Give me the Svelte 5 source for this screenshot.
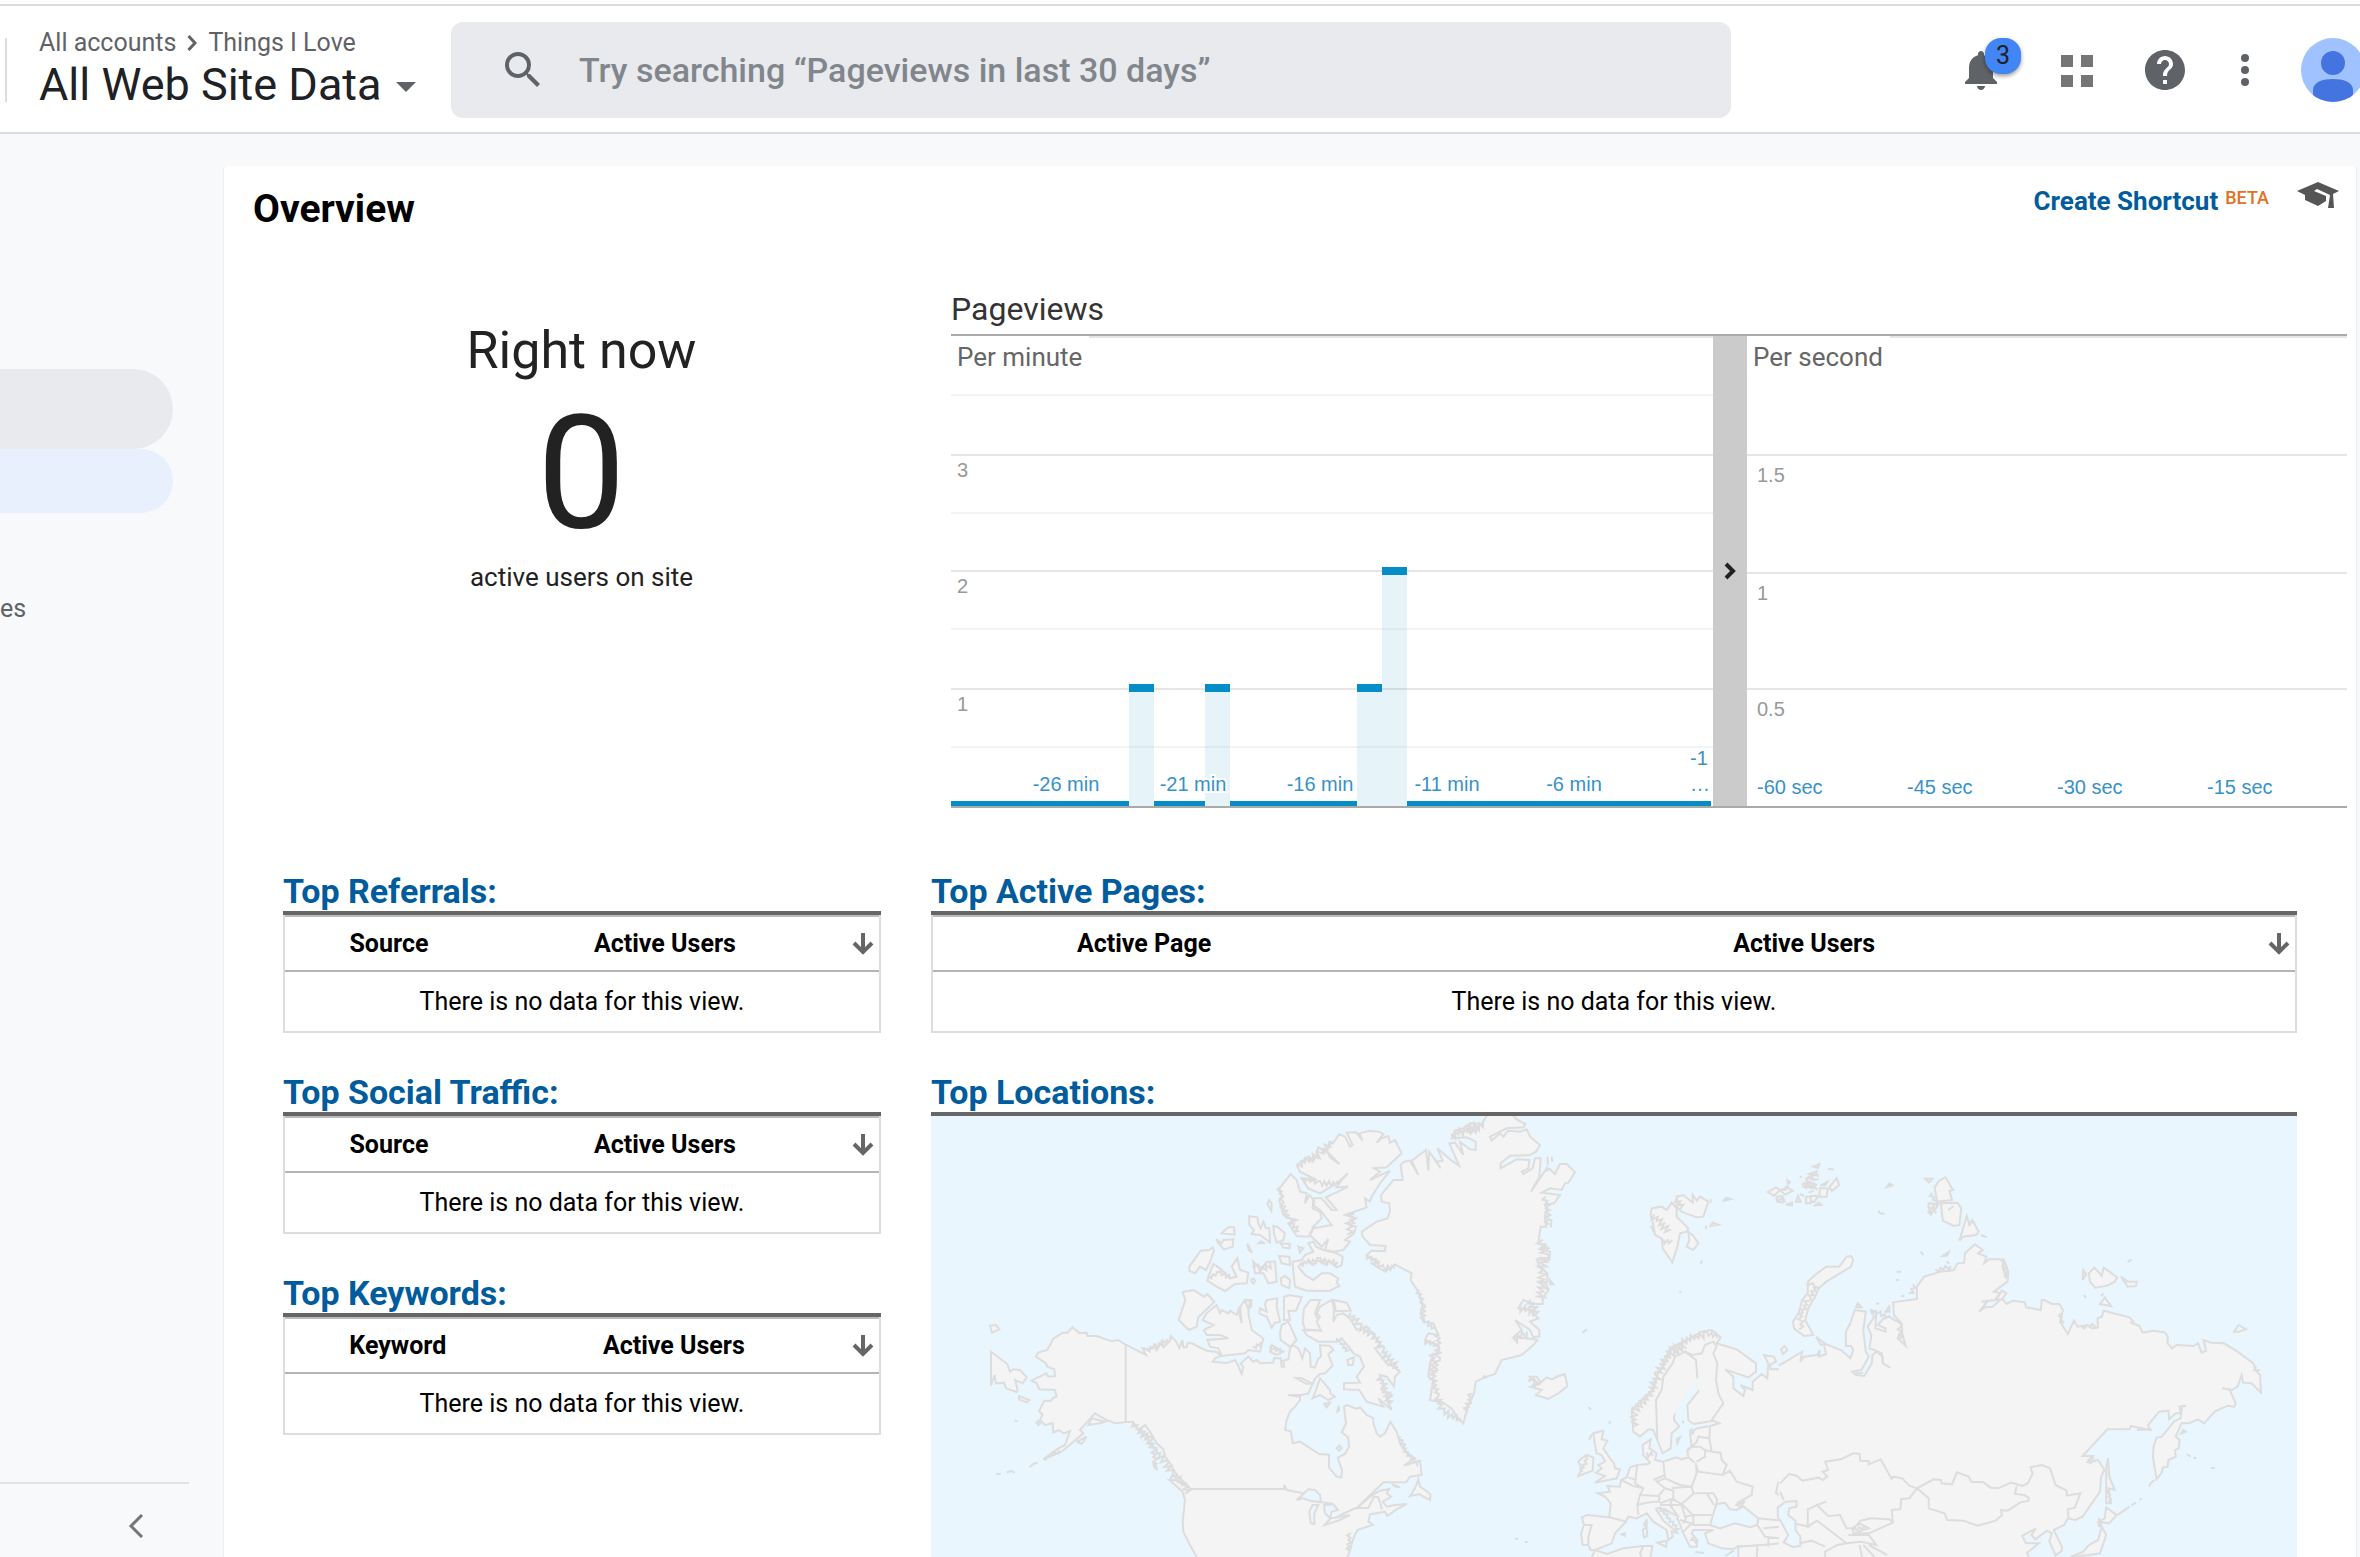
<script>
  const leftTables = [
    { title: 'Top Referrals:', first: 'Source', share: 35 },
    { title: 'Top Social Traffic:', first: 'Source', share: 35 },
    { title: 'Top Keywords:', first: 'Keyword', share: 38 }
  ];
  const activePages = { title: 'Top Active Pages:', first: 'Active Page', share: 31 };

  const slots = 30;
  const slotWidth = 760 / slots;
  const pageviews = [{ slot: 7, n: 1 }, { slot: 10, n: 1 }, { slot: 16, n: 1 }, { slot: 17, n: 2 }];
  const barX = (s) => Math.round(s * slotWidth + 0.3);
  const barTop = (n) => 465 - n * 117;
  const minorLines = [59, 177, 293, 411];
  const majorLines = [{ y: 119, n: 3 }, { y: 235, n: 2 }, { y: 353, n: 1 }];
  const secLines = [{ y: 119, n: '1.5' }, { y: 237, n: '1' }, { y: 353, n: '0.5' }];
  const minLabels = [-26, -21, -16, -11, -6].map((m, i) => ({ text: `${m} min`, x: 115 + i * 127 }));
  const secLabels = [-60, -45, -30, -15].map((s, i) => ({ text: `${s} sec`, x: 10 + i * 150 }));

  // Turns a coast line into the fine zigzag of a fjord coast.
  function fjords(points, amp) {
    let seed = 7;
    const rnd = () => (seed = (seed * 16807) % 2147483647) / 2147483647;
    let d = '';
    for (let i = 0; i < points.length - 1; i++) {
      const [x1, y1] = points[i];
      const [x2, y2] = points[i + 1];
      const len = Math.hypot(x2 - x1, y2 - y1);
      const steps = Math.max(1, Math.round(len / 7));
      for (let k = 0; k < steps; k++) {
        const t = k / steps;
        const off = (k % 2 ? 1 : -1) * amp * (0.3 + rnd());
        const x = x1 + (x2 - x1) * t - ((y2 - y1) / len) * off;
        const y = y1 + (y2 - y1) * t + ((x2 - x1) / len) * off;
        d += `${d ? 'L' : 'M'}${x.toFixed(0)} ${y.toFixed(0)}`;
      }
    }
    return d;
  }

  const america = [
    'M457 682L473 694 478 700 500 698 502 708 530 708 575 724 594 720 617 734 678 765 668 745 690 748 705 735 710 750 725 725 730 742 750 722 752 708 768 724 778 744 787 720 790 742 800 742 803 730 815 730 860 752 890 756 903 768 885 775 878 785 920 790 945 780 955 798 965 822 970 800 962 790 985 770 1000 785 1010 780 1020 790 1060 788 1062 775 1082 775 1085 800 1093 800 1090 782 1105 778 1110 745 1118 735 1135 745 1147 775 1155 745 1170 760 1172 800 1185 803 1195 775 1203 770 1200 735 1230 738 1240 750 1225 762 1238 797 1215 820 1200 822 1185 835 1165 880 1145 885 1105 885 1140 890 1140 900 1125 920 1110 935 1100 960 1095 990 1113 994 1118 1030 1140 1025 1197 1062 1227 1064 1227 1102 1250 1130 1264 1132 1266 1110 1253 1073 1275 1062 1287 1040 1284 1012 1265 997 1278 970 1272 920 1282 915 1310 927 1320 922 1340 945 1360 955 1360 970 1370 1000 1380 1010 1395 1000 1402 985 1411 965 1430 995 1440 1030 1455 1055 1485 1075 1452 1097 1500 1082 1505 1125 1470 1130 1458 1147 1390 1147 1310 1225 1350 1190 1380 1172 1408 1167 1400 1180 1413 1190 1388 1205 1400 1220 1425 1215 1460 1212 1430 1228 1402 1248 1395 1235 1350 1243 1345 1265 1358 1275 1312 1290 1300 1315 1290 1350 1280 1380 835 1380 810 1335 790 1295 788 1265 795 1200 788 1175 748 1140 765 1140 810 1165 795 1150 770 1125 750 1090 735 1070 730 1048 710 1030 690 995 675 975 655 990 638 965 617 966 587 970 560 960 525 940 480 990 490 1000 425 1055 370 1078 410 1048 435 1035 450 993 432 1000 415 990 400 998 398 970 375 975 360 960 368 945 357 933 373 902 392 903 400 893 410 890 405 870 358 868 350 850 335 842 378 820 385 830 405 828 403 808 382 800 378 790 348 770 355 757 382 750 400 716 428 698 442 698Z',
    'M1130 195L1165 170 1178 185 1185 172 1200 175 1190 155 1195 142 1225 160 1230 172 1258 192 1222 155 1228 125 1240 128 1258 103 1275 110 1290 140 1298 135 1280 98 1308 97 1328 122 1318 100 1350 92 1375 95 1390 102 1370 128 1385 115 1405 108 1410 128 1425 120 1445 160 1400 202 1362 205 1380 215 1350 240 1410 212 1380 250 1355 290 1350 305 1335 295 1340 322 1275 345 1308 355 1278 370 1308 380 1302 400 1275 420 1290 425 1270 450 1240 455 1215 450 1225 417 1205 440 1170 405 1180 385 1235 375 1200 330 1182 318 1182 295 1205 295 1235 330 1250 330 1218 292 1285 260 1250 262 1265 240 1284 220 1250 250 1200 280 1165 265 1145 235 1190 240 1160 225 1140 215Z',
    'M1112 223L1130 240 1140 275 1160 280 1155 310 1168 285 1180 300 1178 325 1200 335 1205 355 1175 385 1185 375 1165 410 1130 408 1105 370 1130 360 1100 352 1090 345 1078 300 1090 290 1075 270 1090 250Z',
    'M1048 300L1055 312 1054 332 1042 312Z M987 349L1012 352 1015 370 1022 385 1030 365 1038 385 1048 385 1050 427 1020 405 995 402 1002 390 988 375Z M1060 378L1072 380 1095 400 1090 420 1070 428 1062 400Z M905 400L925 382 942 382 944 404Z M888 418L905 430 910 420 940 418 938 440 912 448 900 435Z',
    'M808 500L842 452 868 450 878 442 882 452 868 490 858 510 840 500 825 520 808 512Z M865 530L880 492 900 505 915 520 930 535 950 530 935 500 952 475 960 510 985 518 980 550 945 552 915 573 890 560 862 542Z M1000 485L1015 500 1020 515 1040 485 1065 485 1070 545 1045 550 1030 520 1005 520Z M1077 468L1108 470 1110 495 1085 490Z M1082 430L1110 432 1108 445 1090 443Z M1135 440L1150 445 1140 458Z M982 430L996 458 986 450Z M1082 535L1095 528 1110 540 1108 565 1085 555Z M1015 430L1035 430 1022 424Z M993 540L1000 535 1006 543 1000 551Z',
    'M1118 485L1145 480 1155 465 1180 455 1165 430 1180 425 1188 440 1210 450 1250 460 1268 470 1265 495 1250 502 1225 482 1220 495 1190 480 1180 495 1165 485 1145 490 1135 500 1155 525 1180 540 1205 520 1230 520 1255 535 1250 548 1258 558 1230 572 1160 572 1125 560 1120 515Z',
    'M788 576L820 570 852 590 862 582 883 606 835 652 830 680 807 690 776 660 796 600Z',
    'M890 615L900 640 905 630 925 640 930 632 950 645 955 630 965 670 960 620 975 600 990 602 985 640 995 690 1030 715 1020 755 985 750 975 760 905 768 895 745 870 740 862 720 925 715 900 705 860 705 852 690 880 675 848 660 860 640Z M975 600L994 600 994 618 985 628Z',
    'M1040 600L1072 595 1070 620 1080 665 1065 668 1055 683 1040 650 1018 640 1020 625 1040 635 1035 612Z M1092 590L1110 585 1145 592 1128 632 1105 632 1110 660 1092 660Z M1085 675L1105 665 1130 720 1110 740 1082 720 1080 700Z M1055 735L1090 755 1070 765 1050 755Z',
    'M1172 600L1200 600 1185 640 1205 680 1203 692 1155 688 1148 665 1152 625Z',
    'M1200 620L1235 600 1242 625 1240 665 1250 645 1270 640 1290 655 1310 690 1340 680 1365 710 1385 740 1365 745 1380 765 1400 790 1420 800 1440 815 1425 830 1422 860 1400 830 1380 825 1390 850 1385 870 1415 885 1400 895 1415 930 1375 895 1390 920 1340 905 1318 870 1272 868 1272 850 1320 848 1310 830 1332 800 1320 770 1300 760 1290 745 1265 715 1250 725 1195 725 1160 705 1150 690 1203 692 1190 665 1200 650 1190 640Z',
    'M1240 600L1280 608 1292 632 1248 634Z M1200 835L1230 870 1230 880 1245 890 1225 900 1200 885 1178 895 1188 870Z M1212 912L1230 908 1220 922Z M1282 780L1302 772 1298 795 1285 795Z M1252 935L1256 917 1258 930Z M1250 1045L1258 1036 1265 1044 1258 1052Z',
    'M210 677L228 675 238 688 216 698Z M213 856L213 755 262 792 270 815 280 808 300 810 320 832 308 850 285 840 293 870 290 876 258 865 252 848 228 850 224 825Z M297 888L328 900 320 907 297 898Z M284 961L293 964 M349 968L354 963 361 970 355 975Z M472 1025L500 1010 485 1032Z M505 975L515 955 555 965 540 970Z M228 1122L242 1123 M260 1117L275 1113 285 1118 M328 1102L340 1092 353 1088',
    'M1495 1138L1485 1165 1470 1188 1500 1182 1510 1190 1530 1200 1531 1183 1515 1170 1500 1160Z',
    'M617 734V966 M810 1167H1093L1092 1155 1100 1170 1150 1180 M1205 1207L1240 1212 M1215 1275L1262 1245 1305 1225 1345 1223 1362 1190 1375 1192 1386 1228 M700 1085L712 1110 702 1100Z'
  ];
  const lakes = 'M1130 1200L1150 1182 1165 1168 1185 1170 1200 1185 1203 1207 1170 1202 1150 1195Z M1172 1270L1168 1235 1178 1215 1195 1215 1183 1240 1183 1272Z M1212 1215L1240 1213 1254 1230 1235 1235 1230 1255 1215 1240Z M1214 1275L1232 1255 1290 1245 1255 1262Z M1128 834L1145 834 1175 850 1160 852Z M1415 1152L1440 1162 1425 1160Z';
  const roughAmerica = [
    [[[640, 968], [665, 1000], [690, 1020], [705, 1055], [740, 1090], [755, 1120], [800, 1160], [805, 1185]], 9],
    [[[665, 985], [700, 1050], [710, 1105]], 6],
    [[[1290, 640], [1320, 680], [1360, 705], [1385, 750], [1435, 810]], 9],
    [[[1380, 830], [1400, 880], [1410, 920]], 9],
    [[[1135, 195], [1200, 160], [1240, 120]], 8],
    [[[1150, 235], [1200, 250], [1260, 250]], 7],
    [[[1080, 260], [1085, 310], [1110, 365], [1140, 400]], 6],
    [[[1300, 340], [1290, 380], [1290, 410]], 9],
    [[[1140, 490], [1200, 480], [1260, 490]], 7],
    [[[1000, 490], [1030, 510], [1060, 490]], 8],
    [[[865, 530], [900, 520], [940, 535]], 6],
    [[[680, 750], [750, 720]], 6],
    [[[370, 1078], [425, 1050]], 4],
    [[[1250, 715], [1290, 760]], 5],
    [[[1050, 740], [1090, 760]], 7],
    [[[1290, 1300], [1285, 1360]], 6],
    [[[1440, 1010], [1460, 1060], [1500, 1100]], 5],
    [[[1000, 740], [1030, 730]], 6]
  ].map(([p, a]) => fjords(p, a));

  const europe = [
    'M302 195L312 185 330 182 355 225 335 182 378 150 385 212 388 155 422 205 400 172 410 185 428 182 412 145 450 178 478 198 448 130 465 128 490 165 480 125 510 148 527 150 527 125 500 112 455 115 465 92 490 85 510 70 545 72 560 48 562 36 630 36 650 58 676 72 670 82 620 85 570 110 575 122 600 100 610 110 625 92 660 95 680 88 690 110 720 135 708 155 690 165 630 167 602 190 602 205 650 178 688 180 685 205 665 215 670 222 698 205 705 175 722 175 718 230 693 275 740 205 752 210 765 222 780 192 800 192 825 217 805 248 795 250 785 270 750 265 725 278 780 285 762 310 735 315 740 325 735 350 738 380 722 380 715 430 740 440 720 448 750 455 748 480 710 478 718 500 742 520 742 545 715 545 745 570 728 595 728 612 705 612 670 600 655 625 690 630 715 655 690 665 718 690 718 709 700 712 690 690 645 660 665 690 640 712 680 715 712 720 700 735 665 765 605 780 585 822 560 830 527 845 522 880 500 930 490 970 470 950 455 925 430 908 390 900 400 840 385 830 390 790 400 765 418 755 415 735 375 720 385 700 415 705 400 670 370 665 362 640 368 615 355 575 332 540 335 520 285 493 255 515 215 490 235 485 200 465 215 452 255 453 257 438 210 435 188 410 185 395 230 365 262 355 270 335 268 310 245 305 243 285 280 240 308 240Z',
    'M1055 325L1085 320 1100 330 1115 308 1130 325 1130 350 1165 385 1160 395 1140 400 1132 440 1117 487 1088 445 1085 415 1065 405 1060 375 1052 345Z M1130 290L1150 285 1178 308 1178 285 1190 302 1200 290 1225 305 1210 350 1190 352 1145 335 1130 320Z M1165 395L1180 408 1195 430 1180 450 1160 440 1168 420Z M1052 377L1068 408 M1268 303L1280 293 1292 297Z M1232 378L1238 368 1255 374Z M1218 377V387 M1202 491L1206 481 M1141 572V578 M1232 298V308',
    'M847 698L861 688 M866 921L873 930 M929 962V973 M1148 962L1151 970 M1132 1030L1140 1012 1130 1018Z M645 1316H655 M675 1326H683 M965 1303L975 1300 974 1308Z M1186 1356L1212 1359 M1275 1368L1302 1352 M755 358L752 382 M742 170L744 195 M755 170L757 185 M750 540L760 553 750 552Z',
    'M690 830L710 830 722 848 740 832 755 838 775 828 795 823 802 858 775 880 745 897 708 885 725 870 692 860 718 852Z',
    'M880 1000L910 992 905 1018 922 1022 910 1045 930 1075 942 1090 945 1105 960 1108 950 1135 885 1148 915 1128 888 1118 905 1105 895 1095 915 1085 905 1065 890 1060 885 1035Z M845 1075L860 1065 880 1072 878 1112 835 1128 845 1105 835 1085Z M868 1020L875 1003',
    'M872 1350L865 1335 848 1335 843 1300 852 1275 845 1252 862 1245 928 1252 932 1210 915 1190 893 1180 930 1175 922 1158 960 1160 963 1140 980 1132 990 1102 1012 1095 1045 1092 1050 1088 1030 1065 1028 1035 1052 1018 1048 1045 1070 1060 1065 1080 1090 1085 1130 1072 1145 1078 1165 1072 1162 1050 1175 1040 1170 1000 1190 985 1230 978 1258 970 1240 962 1180 972 1165 960 1162 915 1205 862 1205 850 1195 838 1168 842 1165 870 1125 905 1122 960 1138 980 1115 1000 1112 1045 1088 1060 1072 1020 1060 990 1045 988 1020 1010 1000 995 995 930 1040 885 1060 870 1075 815 1090 800 1110 745 1160 720 1205 695 1235 690 1262 712 1250 730 1310 748 1368 790 1368 815 1345 832 1275 808 1300 830 1300 865 1330 888 1335 870 1322 855 1358 870 1358 845 1385 822 1402 835 1405 790 1392 765 1422 770 1428 785 1410 795 1412 808 1442 808V1345L1405 1340 1372 1340 1315 1338 1300 1348 1265 1345 1225 1330 1215 1300 1240 1290 1180 1290 1175 1300 1192 1320 1190 1340 1170 1340 1150 1300 1135 1260 1110 1240 1078 1222 1068 1228 1090 1262 1135 1300 1115 1295 1118 1310 1105 1320 1100 1290 1060 1265 1040 1240 1010 1255 985 1250 975 1268 945 1300 935 1330 885 1350Z',
    'M872 1380L885 1350 922 1362 970 1345 1030 1338 1057 1338 1050 1380Z M1030 1338L1020 1360 1028 1380 M1315 1380V1340L1445 1330V1380Z M1372 1340L1370 1380 M1072 1328L1100 1322 1098 1340Z M1028 1290L1040 1280 1042 1308 1032 1312Z M1032 1275L1040 1258 1040 1280Z',
    'M1072 1020L1068 900 1085 870 1090 830 1118 790 1125 770 1155 755 1188 780 1192 835 M1155 755L1178 765 1205 760 1215 735 1240 725 1250 740 1240 760 1252 790 1248 840 1255 880 1270 910 1232 965 M1230 978L1228 1015 1195 1010 1190 1025 1165 1050 M1228 1015L1235 1055 1215 1050 1200 1040 1175 1040 M1235 1055L1262 1058 1265 1080 1280 1095 1268 1125 1195 1115 1185 1090 1165 1072 M1215 1050V1070L1190 1085',
    'M1090 1085L1095 1135 1140 1155 1175 1160 1190 1120 1188 1090 M1268 1125L1290 1112 1310 1145 1358 1160 1355 1185 1310 1210 M1175 1160L1180 1180 1240 1180 1252 1200 1245 1225 M1220 1180L1242 1215 M1012 1095L1005 1150 1030 1165 1020 1185 1075 1188 1095 1165 1070 1145 1095 1135 M963 1140L1000 1158 1030 1165 M985 1132L1010 1140 M1020 1185L1012 1215 1015 1245 M1012 1215L1040 1208 1060 1205 1078 1205V1190',
    'M1095 1165L1120 1172V1195L1080 1210 M1115 1195L1145 1212 1180 1182 M1115 1165L1145 1162 1175 1160 M1080 1215H1145L1155 1250 1180 1245V1275H1230 M1118 1195L1110 1215 1135 1250 M1145 1212L1178 1245 1235 1245 M1090 1225L1135 1250 1130 1260 M1140 1260L1175 1270 1150 1295 M1160 1250L1150 1270 M928 1252L980 1265 M852 1275H875L865 1310V1335 M1375 1255L1445 1262 M1372 1275L1395 1310 1445 1315 M1390 1285L1440 1280 M1405 1310V1340 M1435 1145L1428 1180 1445 1190 M1095 1125L1060 1140'
  ];
  const blackSea = 'M1230 1275L1245 1225 1252 1212 1275 1208 1290 1228 1310 1230 1325 1222 1310 1215 1335 1203 1325 1215 1375 1255 1372 1275 1350 1282 1305 1270 1260 1285Z';
  const roughEurope = [
    [[[455, 105], [500, 90], [560, 70]], 11],
    [[[480, 95], [540, 85]], 9],
    [[[735, 290], [745, 330], [740, 380]], 7],
    [[[725, 420], [735, 470], [725, 510], [730, 560], [715, 600]], 12],
    [[[660, 620], [710, 640]], 12],
    [[[690, 600], [715, 650]], 9],
    [[[640, 715], [690, 700]], 12],
    [[[355, 570], [370, 620], [370, 660], [410, 690]], 6],
    [[[375, 720], [410, 740]], 8],
    [[[400, 760], [398, 830], [410, 890], [430, 935], [490, 965]], 8],
    [[[415, 700], [413, 780], [400, 830]], 7],
    [[[515, 880], [495, 940]], 7],
    [[[560, 832], [545, 838]], 7],
    [[[200, 465], [250, 505], [290, 500]], 7],
    [[[1060, 345], [1110, 400]], 10],
    [[[1090, 420], [1120, 430]], 8],
    [[[1130, 295], [1150, 330]], 8],
    [[[690, 830], [710, 850], [700, 870]], 8],
    [[[1000, 980], [1005, 930], [1045, 890], [1075, 820], [1105, 760], [1150, 725], [1220, 700], [1260, 710]], 9],
    [[[1090, 780], [1160, 735]], 9],
    [[[1040, 1060], [1065, 1065]], 9],
    [[[865, 1065], [840, 1120]], 5],
    [[[1180, 1310], [1190, 1335]], 8],
    [[[740, 200], [755, 215]], 9],
    [[[1080, 1225], [1140, 1295]], 4],
    [[[1175, 985], [1180, 1010]], 5]
  ].map(([p, a]) => fjords(p, a));

  const asia = [
    'M-3 797L30 775 60 755 55 785 65 770 100 765 108 750 105 770 125 762 118 730 165 750 190 775 198 750 192 738 178 738 178 695 190 670 202 630 232 635 225 690 232 755 240 770 220 810 195 815 205 825 228 828 248 790 250 765 262 755 278 770 278 790 298 803 278 790 275 760 255 750 242 745 247 705 237 680 255 650 245 628 260 640 258 685 285 695 285 685 265 675 280 655 295 650 325 670 330 690 318 715 340 738 330 700 330 672 308 645 306 607 370 597 370 560 390 530 435 515 470 510 480 490 498 488 500 460 527 433 548 450 535 460 558 470 552 490 565 478 595 478 610 490 617 520 615 545 578 575 598 580 580 600 545 605 560 605 538 635 555 622 575 620 600 595 612 612 630 602 662 607 665 622 705 630 708 600 715 600 735 612 755 612 765 630 757 665 778 702 795 662 805 680 830 675 845 685 860 682 858 655 870 650 875 632 945 652 955 665 950 668 972 678 980 698 1010 692 1040 697 1048 710 1048 730 1060 745 1072 735 1118 738 1130 730 1140 758 1152 752 1145 720 1165 728 1200 730 1237 755 1280 790 1285 810 1298 825 1300 878 1275 850 1252 848 1248 825 1237 860 1222 870 1195 865 1215 868 1232 910 1228 920 1210 917 1175 935 1147 970 1130 958 1105 970 1085 970 1070 1010 1080 1020 1078 1045 1068 1050 1070 1070 1050 1080 1048 1100 1035 1103 1032 1118 1018 1138 1008 1070 1010 1040 1018 1013 1032 1010 1065 965 1083 955 1087 918 1098 918 1080 920 1083 940 1070 940 1052 958 1050 932 1025 935 995 975 1000 990 948 978 945 987 885 988 818 1068 845 1068 832 1085 860 1080 877 1110 868 1130 865 1175 818 1250 798 1260 778 1255 768 1275 740 1290 762 1340 762 1352 745 1366 737 1345 728 1325 735 1300 722 1292 690 1318 680 1305 692 1285 655 1308 665 1330 700 1330 668 1358 675 1380H-3',
    'M198 480L192 500 125 545 105 565 95 590 78 620 68 660 90 705 65 708 38 685 35 665 50 640 60 600 75 580 75 545 95 525 125 500 160 500 180 470 192 468Z M98 710L120 730 110 735Z M205 622L210 610 220 622Z M3 748L12 738 20 750 8 762Z',
    'M447 232L468 270 458 272 465 300 425 305 418 262 430 242Z M435 310L480 308 490 325 485 375 470 378 440 362Z M455 330L470 318 M485 422L505 348 512 375 520 360 537 395 530 405 495 410Z M402 310L428 312 420 328 402 322Z M392 236L412 236 403 247Z M543 405L560 412 M288 262L296 250 304 256Z M266 332L270 340 283 341 M380 455L388 465 M440 468L456 456 452 467Z M603 475L617 515 610 530 603 505Z M583 600L600 572 612 580 600 598Z',
    'M835 520L850 503 870 528 875 503 912 532 905 545 885 557 852 563 838 545Z M922 530L940 545 965 545 962 558 940 560Z M820 510L828 523 818 540Z M865 612L878 592 895 618Z M868 588L875 580 M822 585L827 594 M940 487L950 478 M1228 695L1240 675 1260 688 1240 695Z',
    'M887 1075L890 1130 905 1170 888 1165 895 1210 882 1210 882 1100Z M882 1222L910 1245 890 1270 862 1265 878 1255Z M870 1280L882 1305 865 1360 835 1365 785 1371 820 1355 835 1335 860 1320Z M862 1255L870 1280 862 1278Z M912 1245L945 1220 M950 1216L962 1208 M972 1200L978 1195 M998 1160L1002 1150 1012 1140 M1100 1062L1110 1070 M1118 1072L1125 1076 M1165 1104H1175 M1085 1000L1090 990 1097 995Z M965 990L1005 988 M832 1080L850 1072 M205 820H225 M315 515H328 M314 540H322 M328 588H336 M285 635L295 620 296 635Z M260 612L268 610',
    'M0 1150L25 1122 45 1127 60 1142 105 1133 115 1140 128 1130 115 1115 130 1110 122 1085 165 1078 198 1060 215 1062 217 1082 240 1083V1093L272 1078 302 1137 307 1130 330 1135 350 1157 370 1165 415 1138 435 1140 437 1150 465 1153 478 1117 510 1130 517 1145 550 1147 570 1163 590 1165 625 1148 655 1158 670 1150 683 1120 677 1102 708 1095 730 1105 745 1155 775 1172 775 1187 812 1180 797 1223 778 1228 780 1255 M370 1165L402 1195V1225L445 1240 452 1260 495 1262 535 1277 583 1262 600 1245 598 1230 615 1232 650 1207 672 1203V1193L660 1185 635 1182 640 1158',
    'M370 1165L350 1195 328 1197 325 1228 302 1230 305 1265 295 1258 245 1255 218 1262 200 1285 180 1285 162 1245 130 1248 100 1215 75 1228V1280L100 1262 180 1330 M100 1215L125 1205 M305 1268L240 1300 200 1300 195 1285 215 1270 240 1285 210 1295 M185 1305H240L260 1335 220 1325 180 1330 155 1335 122 1355V1371 M45 1272L80 1280 M55 1330L85 1322 122 1340 M215 1335L222 1371 M225 1335L255 1370 M240 1335L290 1365 M0 1175L10 1200'
  ];
  const caspian = 'M-6 1222L15 1205 45 1203V1220L25 1225 22 1245 42 1262V1290L55 1310V1338L35 1341 10 1328 22 1305 5 1270 -6 1250Z';
  const roughAsia = [
    [[[75, 545], [100, 560], [75, 600], [55, 650], [60, 695]], 6],
    [[[350, 580], [370, 550]], 7],
    [[[420, 510], [470, 500]], 6],
    [[[410, 280], [420, 310], [400, 340], [430, 335]], 6],
    [[[450, 485], [465, 485]], 4],
    [[[325, 680], [325, 725]], 6],
    [[[245, 630], [300, 655]], 6],
    [[[757, 640], [765, 680]], 4],
    [[[815, 680], [860, 675]], 5],
    [[[1285, 800], [1297, 820]], 7],
    [[[832, 1085], [860, 1082]], 5],
    [[[200, 1285], [235, 1285]], 6],
    [[[605, 490], [612, 540]], 4],
    [[[888, 1170], [892, 1212]], 4]
  ].map(([p, a]) => fjords(p, a));

  const franzJosef = [
    'M84 126L108 112 120 120 102 137Z M122 122L140 112 158 122 136 134Z M110 140L128 138 128 158 112 155Z M168 155L174 138 182 155Z M198 140H212V160H198Z M212 138L234 138 222 157 212 152Z M240 114L263 116 260 140 238 140Z M268 112L290 84 297 105 276 123Z',
    'M264 56L281 59 M220 50L238 42 234 54Z M208 72L230 64 226 76Z M196 88L214 76 220 90 236 88 M184 104L210 96 232 120 M190 98L214 116 M200 92L228 104 222 112 200 110Z M242 106L262 96 256 106Z M226 166L236 158 244 165Z M138 164L156 158 156 166Z M142 90L150 96 144 102Z M182 78V84 M228 70L236 80 M180 132L192 138 M206 128L222 122'
  ];
  const roughFranzJosef = [
    [[[188, 110], [205, 100], [228, 118]], 7],
    [[[108, 145], [130, 150], [142, 152]], 6],
    [[[128, 118], [150, 105]], 5],
    [[[205, 84], [226, 76]], 5]
  ].map(([p, a]) => fjords(p, a));
</script>

{#snippet report(t)}
  <section class="report">
    <h2><a href="#report">{t.title}</a></h2>
    <table>
      <colgroup>
        <col style="width: {t.share}%" />
        <col />
        <col class="sort-col" />
      </colgroup>
      <thead>
        <tr>
          <th>{t.first}</th>
          <th>Active Users</th>
          <th class="sort">
            <button aria-label="Sort {t.title}">
              <svg width="22" height="24" viewBox="0 0 22 24"><path d="M11 1V20M2 11l9 9 9-9" fill="none" stroke="#666" stroke-width="4" /></svg>
            </button>
          </th>
        </tr>
      </thead>
      <tbody>
        <tr><td colspan="3">There is no data for this view.</td></tr>
      </tbody>
    </table>
  </section>
{/snippet}

<div class="app">
  <header>
    <div class="account">
      <nav>
        <a href="#accounts">All accounts</a>
        <svg width="10" height="16" viewBox="0 0 10 16"><path d="M1.500 1l6.500 7-6.500 7" fill="none" stroke="#5f6368" stroke-width="3" /></svg>
        <a href="#property">Things I Love</a>
      </nav>
      <button class="view">
        All Web Site Data
        <svg width="20" height="10" viewBox="0 0 20 10"><path d="M0 0h20L10 10z" fill="#5f6368" /></svg>
      </button>
    </div>
    <label class="search">
      <svg width="48" height="48" viewBox="0 0 24 24" fill="#5f6368"><path d="M15.500 14h-.79l-.28-.27A6.471 6.471 0 0 0 16 9.500 6.500 6.500 0 1 0 9.500 16c1.610 0 3.090-.59 4.230-1.570l.27.28v.79l5 4.990L20.490 19l-4.990-5zm-6 0C7.010 14 5 11.990 5 9.500S7.010 5 9.500 5 14 7.010 14 9.500 11.990 14 9.500 14z" /></svg>
      <input type="text" aria-label="Search" placeholder="Try searching “Pageviews in last 30 days”" />
    </label>
    <div class="tools">
      <button class="bell" aria-label="Notifications">
        <svg width="48" height="48" viewBox="0 0 24 24" fill="#5f6368"><path d="M12 22c1.100 0 2-.9 2-2h-4c0 1.100.89 2 2 2zm6-6v-5c0-3.070-1.640-5.640-4.500-6.320V4c0-.83-.67-1.500-1.500-1.500s-1.500.67-1.500 1.500v.68C7.630 5.360 6 7.920 6 11v5l-2 2v1h16v-1l-2-2z" /></svg>
        <span class="badge">3</span>
      </button>
      <button class="grid" aria-label="Apps">
        <svg width="48" height="48" viewBox="0 0 24 24" fill="#757575"><path d="M4 4.500h6v6H4zM14 4.500h6v6h-6zM4 14.500h6v6H4zM14 14.500h6v6h-6z" /></svg>
      </button>
      <button class="help" aria-label="Help">
        <svg width="48" height="48" viewBox="0 0 24 24" fill="#5f6368"><path d="M12 2C6.480 2 2 6.480 2 12s4.480 10 10 10 10-4.480 10-10S17.520 2 12 2zm1 17h-2v-2h2v2zm2.070-7.750l-.9.920C13.450 12.900 13 13.500 13 15h-2v-.5c0-1.100.45-2.100 1.170-2.830l1.240-1.260c.37-.36.59-.86.59-1.410 0-1.100-.9-2-2-2s-2 .9-2 2H8c0-2.210 1.790-4 4-4s4 1.790 4 4c0 .88-.36 1.680-.93 2.250z" /></svg>
      </button>
      <button class="more" aria-label="More">
        <svg width="48" height="48" viewBox="0 0 24 24" fill="#5f6368"><circle cx="12" cy="6" r="2" /><circle cx="12" cy="12" r="2" /><circle cx="12" cy="18" r="2" /></svg>
      </button>
      <button class="avatar" aria-label="Account">
        <svg width="64" height="64" viewBox="0 0 64 64">
          <clipPath id="disc"><circle cx="32" cy="32" r="32" /></clipPath>
          <circle cx="32" cy="32" r="32" fill="#a0c3ff" />
          <g clip-path="url(#disc)" fill="#4374e0"><circle cx="32" cy="25" r="12" /><path d="M12 64V52c0-8 10-11 20-11s20 3 20 11v12z" /></g>
        </svg>
      </button>
    </div>
  </header>

  <div class="body">
    <aside>
      <button class="item hover" aria-label="Section"></button>
      <button class="item active" aria-label="Overview"></button>
      <button class="plain">es</button>
      <div class="foot">
        <button aria-label="Collapse navigation">
          <svg width="16" height="24" viewBox="0 0 16 24"><path d="M14 1L3 12l11 11" fill="none" stroke="#757575" stroke-width="3" /></svg>
        </button>
      </div>
    </aside>

    <main>
      <div class="head">
        <h1>Overview</h1>
        <div class="shortcut">
          <a href="#shortcut">Create Shortcut</a><span>BETA</span>
          <button aria-label="Education">
            <svg width="42" height="28" viewBox="0 0 42 28"><path d="M0 9L21 0 42 9 36 12 37 26H31L33 13 20 7 17 9 29 14V19L21 24 8 18V13z" fill="#555" /></svg>
          </button>
        </div>
      </div>

      <div class="live">
        <div class="now">
          <div class="label">Right now</div>
          <div class="count">0</div>
          <div class="sub">active users on site</div>
        </div>

        <section class="chart">
          <h3>Pageviews</h3>
          <div class="plots">
            <svg class="minutes" viewBox="0 0 762 470">
              <path class="major" d="M138 1H762" />
              {#each minorLines as y}<path class="minor" d="M0 {y}H762" />{/each}
              {#each majorLines as l}
                <path class="major" d="M0 {l.y}H762" />
                <text class="tick" x="6" y={l.y + 22}>{l.n}</text>
              {/each}
              <text class="caption" x="6" y="30">Per minute</text>
              <path d="M0 467.500H760" stroke="#058dc7" stroke-width="5" />
              {#each pageviews as b}
                <rect x={barX(b.slot)} y="464" width={barX(b.slot + 1) - barX(b.slot)} height="6" fill="#fff" />
                <rect x={barX(b.slot)} y={barTop(b.n)} width={barX(b.slot + 1) - barX(b.slot)} height={470 - barTop(b.n)} fill="#058dc7" fill-opacity=".1" />
                <rect x={barX(b.slot)} y={barTop(b.n)} width={barX(b.slot + 1) - barX(b.slot)} height="8" fill="#058dc7" />
              {/each}
              {#each minLabels as l}<text class="time" x={l.x} y="455" text-anchor="middle">{l.text}</text>{/each}
              <text class="time" x="739" y="429">-1</text>
              <text class="time" x="739" y="455">…</text>
            </svg>
            <button class="split" aria-label="Collapse per minute chart">
              <svg width="12" height="18" viewBox="0 0 12 18"><path d="M2 2l7 7-7 7" fill="none" stroke="#222" stroke-width="4" /></svg>
            </button>
            <svg class="seconds" viewBox="0 0 600 470">
              <path class="major" d="M143 1H600" />
              {#each secLines as l}
                <path class="major" d="M0 {l.y}H600" />
                <text class="tick" x="10" y={l.y + 27}>{l.n}</text>
              {/each}
              <text class="caption" x="6" y="30">Per second</text>
              {#each secLabels as l}<text class="time" x={l.x} y="458">{l.text}</text>{/each}
            </svg>
          </div>
        </section>
      </div>

      <div class="reports">
        <div class="column">
          {#each leftTables as t}{@render report(t)}{/each}
        </div>
        <div class="column">
          {@render report(activePages)}
          <section class="report">
            <h2><a href="#locations">Top Locations:</a></h2>
            <svg class="map" viewBox="931 1116 1366 441" role="img" aria-label="World map">
              <g transform="matrix(.33333 0 0 .33333 920 1100)">
                {#each america as d}<path {d} />{/each}
                <path class="water" d={lakes} />
                {#each roughAmerica as d}<path class="rough" {d} />{/each}
              </g>
              <g transform="matrix(.33333 0 0 .33333 1300 1100)">
                {#each europe as d}<path {d} />{/each}
                <path class="water" d={blackSea} />
                {#each roughEurope as d}<path class="rough" {d} />{/each}
              </g>
              <g transform="matrix(.3699 0 0 .33333 1780 1100)">
                {#each asia as d}<path {d} />{/each}
                <path class="water" d={caspian} />
                {#each roughAsia as d}<path class="rough" {d} />{/each}
              </g>
              <g transform="matrix(.33333 0 0 .33333 1740 1150)">
                {#each franzJosef as d}<path {d} />{/each}
                {#each roughFranzJosef as d}<path class="rough" {d} />{/each}
              </g>
            </svg>
          </section>
        </div>
      </div>
    </main>
  </div>
</div>

<style>
  :global(body) { margin: 0; overflow: hidden; background: #f8f9fb; }
  .app {
    min-height: 100vh;
    display: flex;
    flex-direction: column;
    font-family: Roboto, "Liberation Sans", sans-serif;
    font-size: 25px;
    color: #000;
  }
  button { border: 0; padding: 0; margin: 0; background: none; font: inherit; color: inherit; cursor: pointer; }
  a { text-decoration: none; color: inherit; }
  svg { display: block; flex: none; }
  h1, h2, h3 { margin: 0; }

  header {
    box-sizing: border-box;
    height: 130px;
    margin-top: 4px;
    padding-top: 2px;
    border-top: 2px solid #dadce0;
    border-bottom: 2px solid #dadce0;
    background: #fff;
    display: flex;
    align-items: center;
    box-shadow: 0 -4px 0 #fff;
  }
  .account {
    box-sizing: border-box;
    width: 446px;
    margin-left: 5px;
    height: 64px;
    border-left: 2px solid #dadce0;
    padding-left: 32px;
    display: flex;
    flex-direction: column;
    justify-content: center;
  }
  nav { display: flex; align-items: center; gap: 11px; line-height: 30px; color: #5f6368; }
  .view { display: flex; align-items: center; gap: 14px; font-size: 45px; line-height: 54px; color: #202124; white-space: nowrap; }
  .view svg { margin-top: 4px; }
  .search {
    box-sizing: border-box;
    flex: 1;
    max-width: 1280px;
    height: 96px;
    border-radius: 12px;
    background: #e8eaed;
    display: flex;
    align-items: center;
    gap: 32px;
    padding: 0 48px;
  }
  .search input { flex: 1; border: 0; padding: 0; background: none; outline: 0; font: 500 34px/40px Roboto, sans-serif; color: #202124; }
  .search input::placeholder { color: #80868b; opacity: 1; }
  .tools { margin-left: auto; margin-right: -5px; display: flex; align-items: center; }
  .bell { position: relative; margin-right: 48px; }
  .badge {
    position: absolute;
    left: 28px;
    top: -8px;
    width: 36px;
    height: 36px;
    border-radius: 16px;
    background: #4285f4;
    box-shadow: 0 2px 4px rgba(0, 0, 0, .4);
    color: #202124;
    line-height: 36px;
    text-align: center;
  }
  .grid { margin-right: 40px; }
  .help, .more { margin-right: 32px; }

  .body { flex: 1; display: flex; }
  aside { width: 223px; flex: none; display: flex; flex-direction: column; align-items: flex-start; padding-top: 235px; box-sizing: border-box; }
  .item { width: 173px; }
  .hover { height: 80px; border-radius: 0 40px 40px 0; background: #e8eaed; }
  .active { height: 64px; border-radius: 0 32px 32px 0; background: #e8f0fe; }
  .plain { margin-top: 80px; line-height: 32px; color: #5f6368; }
  .foot { margin-top: auto; width: 189px; height: 73px; border-top: 2px solid #e0e2e5; display: flex; justify-content: flex-end; align-items: flex-start; }
  .foot button { padding: 30px 45px 0 0; }

  main {
    flex: 1;
    min-width: 0;
    margin: 32px 3px 0 0;
    padding-top: 22px;
    border: 1px solid #eceef0;
    border-bottom: 0;
    border-top: 0;
    border-radius: 4px 4px 0 0;
    background: #fff;
  }
  .head { display: flex; justify-content: space-between; align-items: flex-start; padding: 0 17px 0 29px; height: 44px; }
  h1 { font-size: 39px; line-height: 42px; font-weight: 700; }
  .shortcut { display: flex; align-items: flex-start; margin-top: -6px; }
  .shortcut a { font-size: 26px; line-height: 38px; font-weight: 700; color: #005c9c; }
  .shortcut span { margin: 0 28px 0 7px; font-size: 18px; line-height: 32px; font-weight: 500; color: #e37125; }

  .live { display: grid; grid-template-columns: 597fr 1396fr; gap: 71px; padding: 57px 9px 0 59px; }
  .now { text-align: center; padding-top: 32px; color: #222; }
  .label { font-size: 52px; line-height: 60px; margin-bottom: 12px; }
  .count { font-size: 158px; line-height: 160px; margin-bottom: 8px; }
  .sub { font-size: 26px; line-height: 32px; }
  h3 { font-size: 32px; line-height: 40px; font-weight: 400; color: #333; margin-bottom: 5px; }
  .plots { display: flex; border-top: 2px solid #aaa; border-bottom: 2px solid #aaa; }
  .minutes { flex: 762 1 0; min-width: 0; }
  .seconds { flex: 600 1 0; min-width: 0; }
  .split { width: 34px; flex: none; background: #cbcbcb; display: flex; align-items: center; justify-content: center; }
  .major { stroke: #e5e5e5; stroke-width: 2; }
  .minor { stroke: #f3f3f3; stroke-width: 2; }
  .caption { font-size: 26px; fill: #666; }
  .tick, .time { font-family: "Liberation Sans", Arial, sans-serif; font-size: 20px; fill: #999; }
  .time { fill: #3792c8; stroke: #fff; stroke-width: 4px; paint-order: stroke; }

  .reports { display: grid; grid-template-columns: 598fr 1366fr; gap: 50px; padding: 63px 59px 0 59px; }
  .column { display: flex; flex-direction: column; gap: 39px; }
  h2 { font-size: 34px; line-height: 40px; font-weight: 700; color: #005c9c; border-bottom: 4px solid #666; }
  table { width: 100%; table-layout: fixed; border-collapse: separate; border-spacing: 0; border: 2px solid #ddd; border-top: 0; }
  .sort-col { width: 42px; }
  th, td { padding: 0; text-align: center; }
  th { height: 53px; border-top: 2px solid #bbb; border-bottom: 2px solid #b5b5b5; font-weight: 700; }
  td { height: 59px; }
  .sort button { display: block; margin-left: auto; padding-right: 5px; }
  .map { width: 100%; height: auto; background: #e9f6fe; }
  .map path { fill: #f4f4f4; stroke: #ddd; stroke-width: 2; vector-effect: non-scaling-stroke; }
  .map .water { fill: #e9f6fe; }
  .map .rough { fill: none; }
</style>
